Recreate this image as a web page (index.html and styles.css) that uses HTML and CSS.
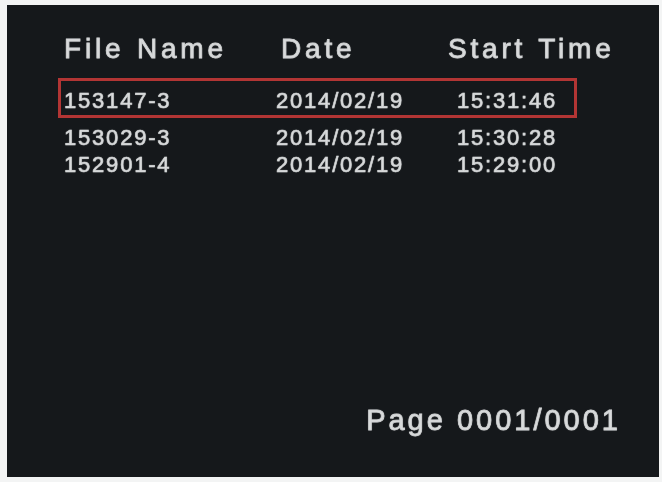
FILE: index.html
```html
<!DOCTYPE html>
<html>
<head>
<meta charset="utf-8">
<link rel="stylesheet" href="styles.css">
</head>
<body>
<div class="screen">
  <div class="header">
    <span class="h-name">File Name</span>
    <span class="h-date">Date</span>
    <span class="h-time">Start Time</span>
  </div>
  <div class="row selected">
    <span class="c-name">153147-3</span>
    <span class="c-date">2014/02/19</span>
    <span class="c-time">15:31:46</span>
  </div>
  <div class="row first">
    <span class="c-name">153029-3</span>
    <span class="c-date">2014/02/19</span>
    <span class="c-time">15:30:28</span>
  </div>
  <div class="row">
    <span class="c-name">152901-4</span>
    <span class="c-date">2014/02/19</span>
    <span class="c-time">15:29:00</span>
  </div>
  <div class="footer">Page 0001/0001</div>
</div>
</body>
</html>
```

FILE: styles.css
```css
html, body {
  margin: 0;
  padding: 0;
  background: #f3f4f4;
}
.screen {
  box-sizing: border-box;
  margin: 5px 3px 0 7px;
  height: 472px;
  background: #15181b;
  padding: 28px 0 0 51px;
  display: flex;
  flex-direction: column;
  font-family: "Liberation Sans", Arial, sans-serif;
  color: #d9dbdc;
  -webkit-text-stroke: 0.6px #cfd1d2;
  text-shadow: 0 0 1.5px rgba(220, 222, 224, 0.55);
  filter: blur(0.35px);
}
.header {
  display: flex;
  padding-left: 6px;
  font-size: 28px;
  line-height: 32px;
  letter-spacing: 3.8px;
  word-spacing: 1px;
  -webkit-text-stroke: 0.8px #cfd1d2;
}
.h-name { width: 217px; }
.h-date { width: 167px; }
.row {
  display: flex;
  width: 519px;
  box-sizing: border-box;
  padding-left: 6px;
  font-size: 22px;
  line-height: 27px;
  letter-spacing: 1.8px;
}
.row.selected {
  margin-top: 13px;
  border: 3px solid #b23534;
  padding: 6px 0 1px 3px;
  line-height: 27px;
}
.row.first { margin-top: 6px; }
.c-name { width: 212px; }
.c-date { width: 181px; }
.footer {
  margin-top: auto;
  align-self: flex-end;
  padding: 0 38px 40px 0;
  font-size: 29px;
  line-height: 34px;
  letter-spacing: 3px;
  -webkit-text-stroke: 0.8px #cfd1d2;
}
```
